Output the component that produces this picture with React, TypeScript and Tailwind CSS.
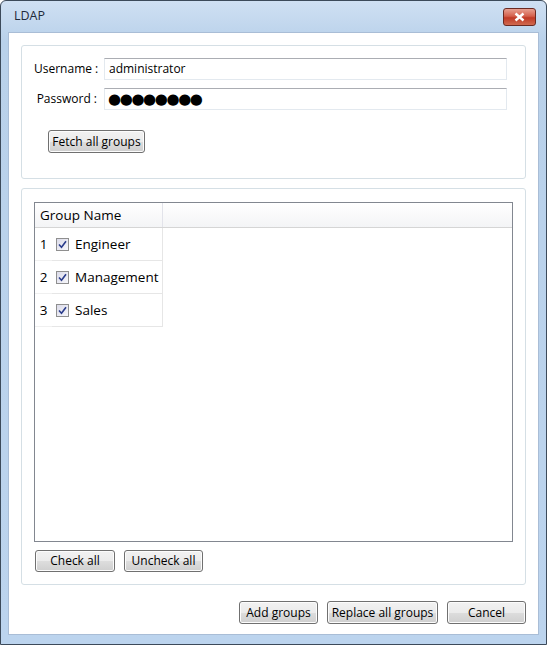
import React from "react";

const font = { fontFamily: '"Open Sans", "Noto Sans", sans-serif' };

function Btn({ label, w, h = "h-[23px]" }: { label: string; w: string; h?: string }) {
  return (
    <button
      className={`${w} ${h} flex items-center justify-center whitespace-nowrap rounded-[3px] border border-[#707070] bg-[linear-gradient(#f2f2f2_0%,#ebebeb_50%,#dddddd_51%,#cfcfcf_100%)] text-[12px] leading-none text-black shadow-[inset_0_0_0_1px_#fcfcfc]`}
    >
      {label}
    </button>
  );
}

function Check() {
  return (
    <span className="flex h-[13px] w-[13px] shrink-0 items-center justify-center border border-[#8f8f8f] bg-[linear-gradient(135deg,#dcdcea,#f6f6fa)]">
      <svg width="9" height="9" viewBox="0 0 9 9">
        <path d="M1 4.5 L3.5 7.2 L8 1.2" fill="none" stroke="#2a3c8c" strokeWidth="1.6" />
      </svg>
    </span>
  );
}

const groups = ["Engineer", "Management", "Sales"];

export default function App() {
  return (
    <div style={font} className="flex h-[645px] w-[547px] flex-col rounded-t-[6px] border border-[#3c4a5a] bg-[linear-gradient(#cfe0f3,#b9d1ea_40px,#bcd4ee)]">
      {/* title bar */}
      <div className="flex h-[31px] items-center justify-between pl-[13px] pr-[10px]">
        <span className="text-[12.5px] text-[#1e2a3a]">LDAP</span>
        <span className="flex h-[18px] w-[33px] items-center justify-center rounded-[3px] border border-[#6b2a22] bg-[linear-gradient(#e8a091,#d4604c_45%,#c03a26_55%,#d06a50)]">
          <svg width="11" height="10" viewBox="0 0 11 10">
            <path d="M1.5 1.5 L9.5 8.5 M9.5 1.5 L1.5 8.5" stroke="#fff" strokeWidth="2.4" />
          </svg>
        </span>
      </div>

      {/* client area */}
      <div className="mx-[7px] mb-[9px] flex flex-1 flex-col border border-[#a9bdd6] bg-white px-[12px] pt-[12px]">
        {/* login box */}
        <div className="h-[134px] rounded-[3px] border border-[#d5dfe5] px-[12px] pt-[12px]">
          <div className="flex flex-col gap-[8px]">
            <div className="flex items-center">
              <span className="w-[64px] whitespace-nowrap pr-[1px] text-right text-[12px] text-black">Username :</span>
              <div className="ml-[6px] flex h-[22px] w-[403px] items-center border border-[#e3e9ef] border-t-[#abadb3] px-[4px] text-[12px] text-black">
                administrator
              </div>
            </div>
            <div className="flex items-center">
              <span className="w-[64px] whitespace-nowrap pr-[1px] text-right text-[12px] text-black">Password :</span>
              <div className="ml-[6px] flex h-[22px] w-[403px] items-center border border-[#e3e9ef] border-t-[#abadb3] px-[3px]">
                <span className="text-[15px] leading-none tracking-[-1.4px] text-black" style={{ fontFamily: '"DejaVu Sans", sans-serif' }}>
                  ●●●●●●●●
                </span>
              </div>
            </div>
          </div>
          <div className="mt-[20px] pl-[14px]">
            <Btn label="Fetch all groups" w="w-[97px]" />
          </div>
        </div>

        {/* groups box */}
        <div className="mt-[9px] flex h-[397px] flex-col rounded-[3px] border border-[#d5dfe5] px-[12px] pt-[13px]">
          <div className="flex h-[340px] flex-col border border-[#828790] bg-white">
            <div className="flex h-[25px] border-b border-[#d5d5d5] bg-[linear-gradient(#ffffff,#f3f4f6)]">
              <div className="flex w-[128px] items-center whitespace-nowrap border-r border-[#e2e3ea] pl-[5px] text-[13.5px] text-black">Group Name</div>
              <div className="flex-1" />
            </div>
            {groups.map((g, i) => (
              <div key={g} className="flex h-[33px]">
                <div className="flex w-[17px] items-center justify-center border-b border-[#f0f0f0] text-[13.5px] text-black">{i + 1}</div>
                <div className="flex w-[111px] items-center gap-[6px] whitespace-nowrap border-r border-b border-[#e6e6e6] pl-[4px] text-[13.5px] text-black">
                  <Check />
                  <span>{g}</span>
                </div>
              </div>
            ))}
          </div>
          <div className="mt-[8px] flex gap-[9px] pl-[1px]">
            <Btn label="Check all" w="w-[80px]" h="h-[22px]" />
            <Btn label="Uncheck all" w="w-[79px]" h="h-[22px]" />
          </div>
        </div>

        {/* dialog buttons */}
        <div className="mt-[16px] flex justify-end gap-[9px]">
          <Btn label="Add groups" w="w-[79px]" />
          <Btn label="Replace all groups" w="w-[111px]" />
          <Btn label="Cancel" w="w-[79px]" />
        </div>
      </div>
    </div>
  );
}
